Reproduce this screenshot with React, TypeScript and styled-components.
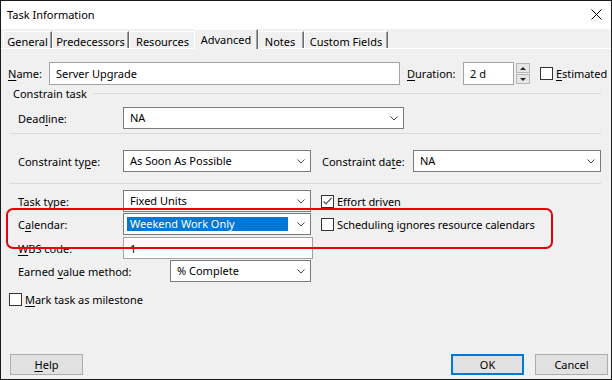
import styled, { createGlobalStyle } from 'styled-components';

const GlobalStyle = createGlobalStyle`
  html, body { margin: 0; padding: 0; background: #fff; }
  body {
    font-family: "Noto Sans", "Open Sans", sans-serif;
    font-size: 11px;
    color: #000;
  }
  u { text-decoration: underline; text-underline-offset: 2px; }
`;

const tabs = [
  { name: 'General', w: 49 },
  { name: 'Predecessors', w: 77 },
  { name: 'Resources', w: 67 },
  { name: 'Advanced', w: 60, active: true },
  { name: 'Notes', w: 48 },
  { name: 'Custom Fields', w: 84 },
];

function Chevron() {
  return (
    <ChevronIcon width="8" height="5" viewBox="0 0 8 5">
      <polyline points="0.5,0.5 4,4 7.5,0.5" fill="none" stroke="#444" strokeWidth="1" />
    </ChevronIcon>
  );
}

function Check({ checked }: { checked?: boolean }) {
  return (
    <CheckBox>
      {checked && (
        <svg width="11" height="11" viewBox="0 0 11 11">
          <polyline points="1.5,5.5 4,8 9.5,2" fill="none" stroke="#555" strokeWidth="1.2" />
        </svg>
      )}
    </CheckBox>
  );
}

function App() {
  return (
    <>
      <GlobalStyle />
      <Window>
        <TitleBar>
          <span>Task Information</span>
          <svg width="11" height="11" viewBox="0 0 11 11">
            <path d="M0.5 0.5 L10.5 10.5 M10.5 0.5 L0.5 10.5" stroke="#000" strokeWidth="1" />
          </svg>
        </TitleBar>
        <TabStrip>
          {tabs.map((t) => (
            <Tab key={t.name} $w={t.w} $active={!!t.active}>
              {t.name}
            </Tab>
          ))}
        </TabStrip>
        <Panel>
          <Row $mt={13} $pl={7} $h={23}>
            <Label $w={41}><u>N</u>ame:</Label>
            <TextBox $w={351}>Server Upgrade</TextBox>
            <Label $w={56} $ml={7}><u>D</u>uration:</Label>
            <TextBox $w={51}>2 d</TextBox>
            <Spinner>
              <SpinHalf><Arrow $up /></SpinHalf>
              <SpinHalf><Arrow /></SpinHalf>
            </Spinner>
            <CheckGap $ml={10}>
              <Check />
              <span><u>E</u>stimated</span>
            </CheckGap>
          </Row>

          <GroupHeader>
            <span>Constrain task</span>
            <Rule />
          </GroupHeader>

          <Row $mt={6} $pl={17}>
            <Label $w={105}>Dead<u>l</u>ine:</Label>
            <Select $w={281}>
              <Value>NA</Value>
              <Chevron />
            </Select>
          </Row>
          <Separator $mt={4} />

          <Row $mt={16} $pl={17}>
            <Label $w={105}>Constraint ty<u>p</u>e:</Label>
            <Select $w={188}>
              <Value>As Soon As Possible</Value>
              <Chevron />
            </Select>
            <Label $w={91} $ml={11}>Constraint da<u>t</u>e:</Label>
            <Select $w={188}>
              <Value>NA</Value>
              <Chevron />
            </Select>
          </Row>
          <Separator $mt={11} />

          <Row $mt={6} $pl={17}>
            <Label $w={105}>Task t<u>y</u>pe:</Label>
            <Select $w={188}>
              <Value>Fixed Units</Value>
              <Chevron />
            </Select>
            <CheckGap $ml={10}>
              <Check checked />
              <span>Eff<u>o</u>rt driven</span>
            </CheckGap>
          </Row>
          <Row $mt={1} $pl={17}>
            <Label $w={105}>C<u>a</u>lendar:</Label>
            <Select $w={188}>
              <Value $selected>Weekend Work Only</Value>
              <Chevron />
            </Select>
            <CheckGap $ml={10}>
              <Check />
              <span>Schedulin<u>g</u> ignores resource calendars</span>
            </CheckGap>
          </Row>
          <Row $mt={2} $pl={17}>
            <Label $w={105}><u>W</u>BS code:</Label>
            <TextBox $w={190}>1</TextBox>
          </Row>
          <Row $mt={1} $pl={17}>
            <Label $w={152}>Earned <u>v</u>alue method:</Label>
            <Select $w={141}>
              <Value>% Complete</Value>
              <Chevron />
            </Select>
          </Row>
          <Row $mt={10} $pl={8} $h={14}>
            <CheckGap>
              <Check />
              <span><u>M</u>ark task as milestone</span>
            </CheckGap>
          </Row>

          <Footer>
            <Button><u>H</u>elp</Button>
            <Spacer />
            <Button $default>OK</Button>
            <Button>Cancel</Button>
          </Footer>
        </Panel>
        <Callout />
      </Window>
    </>
  );
}

const Window = styled.div`
  position: relative;
  width: 612px;
  height: 380px;
  box-sizing: border-box;
  border: 1px solid #1a1a1a;
  background: #f0f0f0;
  display: flex;
  flex-direction: column;
  overflow: hidden;
`;

const TitleBar = styled.div`
  height: 28px;
  flex: none;
  background: #fff;
  display: flex;
  align-items: center;
  justify-content: space-between;
  padding: 0 6px 1px 6px;
  box-sizing: border-box;
  svg { margin-right: 3px; }
`;

const TabStrip = styled.div`
  height: 20px;
  flex: none;
  box-sizing: border-box;
  display: flex;
  align-items: flex-end;
  padding-left: 2px;
  border-bottom: 1px solid #fff;
`;

const Tab = styled.div<{ $w: number; $active: boolean }>`
  width: ${(p) => p.$w + (p.$active ? 4 : 0)}px;
  height: ${(p) => (p.$active ? 20 : 17)}px;
  margin: 0 ${(p) => (p.$active ? -2 : 0)}px ${(p) => (p.$active ? -1 : 0)}px;
  padding-top: ${(p) => (p.$active ? 0 : 2)}px;
  box-sizing: border-box;
  display: flex;
  align-items: center;
  justify-content: center;
  background: #f0f0f0;
  border-top: 1px solid #fff;
  border-left: 1px solid #fff;
  border-right: 1px solid #696969;
  box-shadow: inset -1px 0 #a0a0a0;
  position: relative;
  z-index: ${(p) => (p.$active ? 1 : 0)};
  white-space: nowrap;
`;

const Panel = styled.div`
  flex: 1;
  display: flex;
  flex-direction: column;
`;

const Row = styled.div<{ $mt: number; $pl: number; $h?: number }>`
  display: flex;
  align-items: center;
  height: ${(p) => p.$h ?? 22}px;
  margin-top: ${(p) => p.$mt}px;
  padding-left: ${(p) => p.$pl}px;
  flex: none;
`;

const Label = styled.div<{ $w: number; $ml?: number }>`
  width: ${(p) => p.$w}px;
  margin-left: ${(p) => p.$ml ?? 0}px;
  flex: none;
  white-space: nowrap;
`;

const TextBox = styled.div<{ $w: number }>`
  width: ${(p) => p.$w}px;
  height: 100%;
  box-sizing: border-box;
  border: 1px solid #a3a3a3;
  background: #fff;
  display: flex;
  align-items: center;
  padding-left: 6px;
  flex: none;
`;

const Spinner = styled.div`
  width: 14px;
  height: 21px;
  margin-left: 2px;
  display: flex;
  flex-direction: column;
  gap: 1px;
  flex: none;
`;

const SpinHalf = styled.div`
  flex: 1;
  box-sizing: border-box;
  border: 1px solid #b5b5b5;
  background: #e6e6e6;
  display: flex;
  align-items: center;
  justify-content: center;
`;

const Arrow = styled.div<{ $up?: boolean }>`
  width: 0;
  height: 0;
  border-left: 3px solid transparent;
  border-right: 3px solid transparent;
  ${(p) => (p.$up ? 'border-bottom: 3px solid #222;' : 'border-top: 3px solid #222;')}
`;

const CheckGap = styled.div<{ $ml?: number }>`
  display: flex;
  align-items: center;
  gap: 3px;
  margin-left: ${(p) => p.$ml ?? 0}px;
  white-space: nowrap;
  letter-spacing: -0.05px;
`;

const CheckBox = styled.div`
  width: 13px;
  height: 13px;
  box-sizing: border-box;
  border: 1px solid #333;
  background: #fff;
  display: flex;
  align-items: center;
  justify-content: center;
  flex: none;
`;

const GroupHeader = styled.div`
  height: 16px;
  display: flex;
  align-items: center;
  padding-left: 12px;
  padding-right: 10px;
  flex: none;
  span { margin-right: 6px; white-space: nowrap; }
`;

const Rule = styled.div`
  flex: 1;
  height: 0;
  border-top: 1px solid #d9d9d9;
`;

const Separator = styled.div<{ $mt: number }>`
  margin: ${(p) => p.$mt}px 10px 0 9px;
  border-top: 1px solid #d9d9d9;
  flex: none;
`;

const Select = styled.div<{ $w: number }>`
  width: ${(p) => p.$w}px;
  height: 22px;
  box-sizing: border-box;
  border: 1px solid #7a7a7a;
  background: #fff;
  display: flex;
  align-items: center;
  padding: 0 5px 0 3px;
  flex: none;
`;

const Value = styled.div<{ $selected?: boolean }>`
  flex: 1;
  height: 14px;
  line-height: 14px;
  padding-left: 3px;
  margin-right: ${(p) => (p.$selected ? 9 : 0)}px;
  background: ${(p) => (p.$selected ? '#0078d7' : 'transparent')};
  color: ${(p) => (p.$selected ? '#fff' : '#000')};
  white-space: nowrap;
`;

const ChevronIcon = styled.svg`
  flex: none;
`;

const Footer = styled.div`
  margin-top: auto;
  display: flex;
  gap: 11px;
  padding: 0 3px 4px 9px;
`;

const Spacer = styled.div`
  flex: 1;
`;

const Button = styled.div<{ $default?: boolean }>`
  width: 73px;
  height: 21px;
  box-sizing: border-box;
  border: ${(p) => (p.$default ? '2px solid #0078d7' : '1px solid #adadad')};
  background: #e1e1e1;
  display: flex;
  align-items: center;
  justify-content: center;
`;

const Callout = styled.div`
  position: absolute;
  left: 5px;
  top: 207px;
  width: 543px;
  height: 37px;
  border: 2px solid #e8000b;
  border-radius: 7px;
  pointer-events: none;
`;

export default App;
